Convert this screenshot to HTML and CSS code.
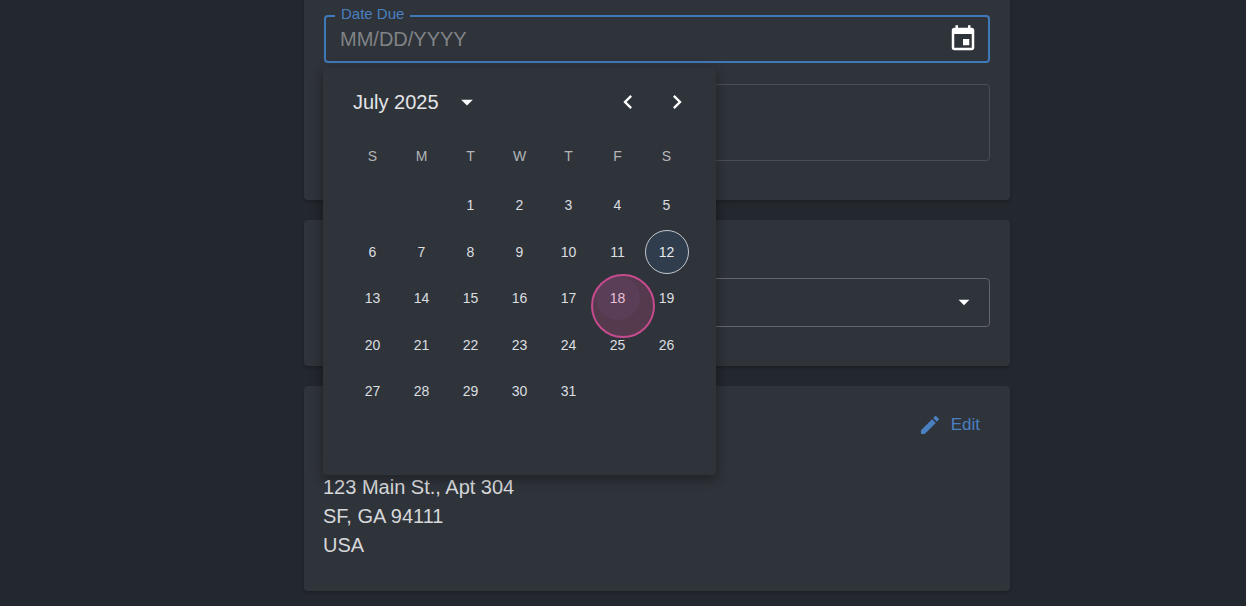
FILE: index.html
```html
<!DOCTYPE html>
<html lang="en">
<head>
<meta charset="utf-8">
<title>Date Due</title>
<link rel="stylesheet" href="styles.css">
</head>
<body>
<main class="column">
  <section class="card card-date">
    <div class="field field-focus">
      <span class="notch">Date Due</span>
      <span class="placeholder">MM/DD/YYYY</span>
      <svg class="icon-cal" viewBox="0 0 24 24"><path d="M17 12h-5v5h5v-5zM16 1v2H8V1H6v2H5c-1.11 0-1.99.9-1.99 2L3 19c0 1.1.89 2 2 2h14c1.1 0 2-.9 2-2V5c0-1.1-.9-2-2-2h-1V1h-2zm3 18H5V8h14v11z"/></svg>
    </div>
    <div class="field field-notes"></div>
  </section>
  <section class="card card-select">
    <div class="field field-select">
      <svg class="icon-caret" viewBox="0 0 24 24"><path d="M7 10l5 5 5-5z"/></svg>
    </div>
  </section>
  <section class="card card-address">
    <div class="edit-row">
      <svg class="icon-edit" viewBox="0 0 24 24"><path d="M3 17.25V21h3.75L17.81 9.94l-3.75-3.75L3 17.25zM20.71 7.04c.39-.39.39-1.02 0-1.41l-2.34-2.34c-.39-.39-1.02-.39-1.41 0l-1.83 1.83 3.75 3.75 1.83-1.83z"/></svg>
      <span>Edit</span>
    </div>
    <address class="address">123 Main St., Apt 304<br>SF, GA 94111<br>USA</address>
  </section>
</main>

<div class="picker">
  <header class="picker-head">
    <span class="month">July 2025</span>
    <svg class="icon-month" viewBox="0 0 24 24"><path d="M7 10l5 5 5-5z"/></svg>
    <span class="spacer"></span>
    <svg class="icon-nav" viewBox="0 0 24 24"><path d="M15.41 7.41L14 6l-6 6 6 6 1.41-1.41L10.83 12z"/></svg>
    <svg class="icon-nav" viewBox="0 0 24 24"><path d="M10 6L8.59 7.41 13.17 12l-4.58 4.59L10 18l6-6z"/></svg>
  </header>
  <div class="weekdays">
    <span>S</span><span>M</span><span>T</span><span>W</span><span>T</span><span>F</span><span>S</span>
  </div>
  <div class="days">
    <span></span><span></span><span>1</span><span>2</span><span>3</span><span>4</span><span>5</span>
    <span>6</span><span>7</span><span>8</span><span>9</span><span>10</span><span>11</span><span class="today">12</span>
    <span>13</span><span>14</span><span>15</span><span>16</span><span>17</span><span class="hovered">18<i class="ring"></i></span><span>19</span>
    <span>20</span><span>21</span><span>22</span><span>23</span><span>24</span><span>25</span><span>26</span>
    <span>27</span><span>28</span><span>29</span><span>30</span><span>31</span>
  </div>
</div>
</body>
</html>
```
FILE: styles.css
```css
* { box-sizing: border-box; }
html, body { margin: 0; height: 100%; }
body {
  background: #23272e;
  color: #dcdee0;
  font-family: "Liberation Sans", Arial, sans-serif;
  overflow: hidden;
  position: relative;
}
.column {
  width: 706px;
  margin-left: 304px;
  margin-top: -20px;
  display: flex;
  flex-direction: column;
}
.card {
  background: #2f333a;
  border-radius: 4px;
  box-shadow: 0 2px 3px rgba(0, 0, 0, .18);
  padding-left: 20px;
  padding-right: 20px;
}
.card-date { height: 219.5px; padding-top: 35px; margin-bottom: 20px; }
.card-select { height: 146.5px; padding-top: 58.5px; margin-bottom: 20px; }
.card-address { height: 204.5px; padding-top: 26px; padding-left: 19px; }
.field {
  position: relative;
  display: flex;
  align-items: center;
  border-radius: 4px;
  border: 1px solid #4a4d54;
}
.field-focus {
  height: 48px;
  border: 2px solid #4079b8;
  padding: 0 14px;
  margin-bottom: 21px;
  justify-content: space-between;
}
.field-notes { height: 76.5px; }
.field-select {
  height: 48.5px;
  border-color: #62656b;
  justify-content: flex-end;
  padding-right: 12px;
}
.notch {
  position: absolute;
  left: 9px;
  top: -12px;
  padding: 0 6px 0 6px;
  background: #2f333a;
  color: #4a80c0;
  font-size: 15px;
  line-height: 17px;
}
.placeholder { color: #808387; font-size: 20px; }
.icon-cal { width: 30px; height: 30px; fill: #fff; margin-right: -4px; }
.icon-caret { width: 26px; height: 26px; fill: #fff; }
.edit-row {
  display: flex;
  justify-content: flex-end;
  align-items: center;
  gap: 9px;
  color: #4a80c0;
  font-size: 17px;
  line-height: 25px;
  padding-right: 10px;
}
.icon-edit { width: 24px; height: 24px; fill: #4a80c0; }
.address {
  font-style: normal;
  font-size: 20px;
  line-height: 29px;
  color: #d6d8da;
  margin-top: 36px;
  margin-left: 0;
}
.picker {
  position: absolute;
  left: 323px;
  top: 68px;
  width: 393px;
  height: 407px;
  background: #2f343b;
  border-radius: 4px;
  box-shadow: 0 5px 10px rgba(0, 0, 0, .22), 0 2px 16px rgba(0, 0, 0, .14);
  padding: 0 24px 0 25px;
}
.picker-head {
  display: flex;
  align-items: center;
  height: 68px;
  padding-left: 5px;
}
.month { font-size: 20px; color: #e4e5e7; }
.icon-month { width: 28px; height: 28px; fill: #fff; margin-left: 14px; }
.spacer { flex: 1; }
.icon-nav { width: 28px; height: 28px; fill: #fff; margin-left: 21px; }
.icon-nav:last-child { margin-right: 1px; }
.weekdays, .days {
  display: grid;
  grid-template-columns: repeat(7, 49px);
  text-align: center;
}
.weekdays {
  height: 40px;
  align-items: center;
  font-size: 14px;
  color: #b3b5b8;
}
.days {
  grid-auto-rows: 46.5px;
  font-size: 14px;
  color: #dcdee0;
  margin-top: 6px;
}
.days span {
  position: relative;
  display: flex;
  align-items: center;
  justify-content: center;
  width: 44px;
  height: 44px;
  margin: 1px 2.5px;
  border-radius: 50%;
}
.today {
  border: 1px solid #c3c7cc;
  background: #2f3d4d;
  color: #e8eaec;
}
.days .hovered {
  background: rgba(110, 90, 170, .12);
  color: #f4e4ee;
}
.ring {
  position: absolute;
  left: -4.5px;
  top: -2px;
  width: 64px;
  height: 64px;
  border-radius: 50%;
  border: 2px solid #c64b8e;
  background: rgba(200, 75, 130, .25);
}
```
